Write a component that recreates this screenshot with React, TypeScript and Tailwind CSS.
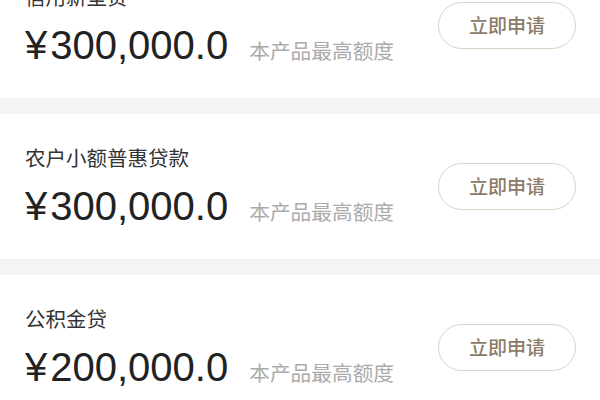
const loans = [
  { name: '信用新型贷', amount: '300,000.0' },
  { name: '农户小额普惠贷款', amount: '300,000.0' },
  { name: '公积金贷', amount: '200,000.0' },
];

function LoanCard({ name, amount }: { name: string; amount: string }) {
  return (
    <div className="h-[145px] bg-white flex items-center justify-between pl-[25px] pr-[24px]">
      <div className="flex flex-col">
        <div className="text-[20.5px] leading-[20px] text-[#333333]">{name}</div>
        <div className="mt-[19px] flex items-baseline">
          <span className="font-['Liberation_Sans','Noto_Sans_CJK_SC',sans-serif] text-[40px] leading-[40px] text-[#222222]">
            ¥
          </span>
          <span className="ml-[3px] font-['Liberation_Sans','Noto_Sans_CJK_SC',sans-serif] text-[40px] leading-[40px] text-[#222222]">
            {amount}
          </span>
          <span className="ml-[21px] text-[20.7px] leading-[20px] text-[#ababab]">本产品最高额度</span>
        </div>
      </div>
      <button className="w-[138px] h-[47px] rounded-full border border-[#ddd2c3] text-[19px] font-medium text-[#8c7b69] bg-white">
        立即申请
      </button>
    </div>
  );
}

export default function App() {
  return (
    <div className="w-[600px] h-[400px] overflow-hidden bg-[#f4f4f4] font-['Noto_Sans_CJK_SC',sans-serif]">
      <div className="-mt-[47px] flex flex-col gap-4">
        {loans.map((loan, i) => (
          <LoanCard key={i} name={loan.name} amount={loan.amount} />
        ))}
      </div>
    </div>
  );
}
